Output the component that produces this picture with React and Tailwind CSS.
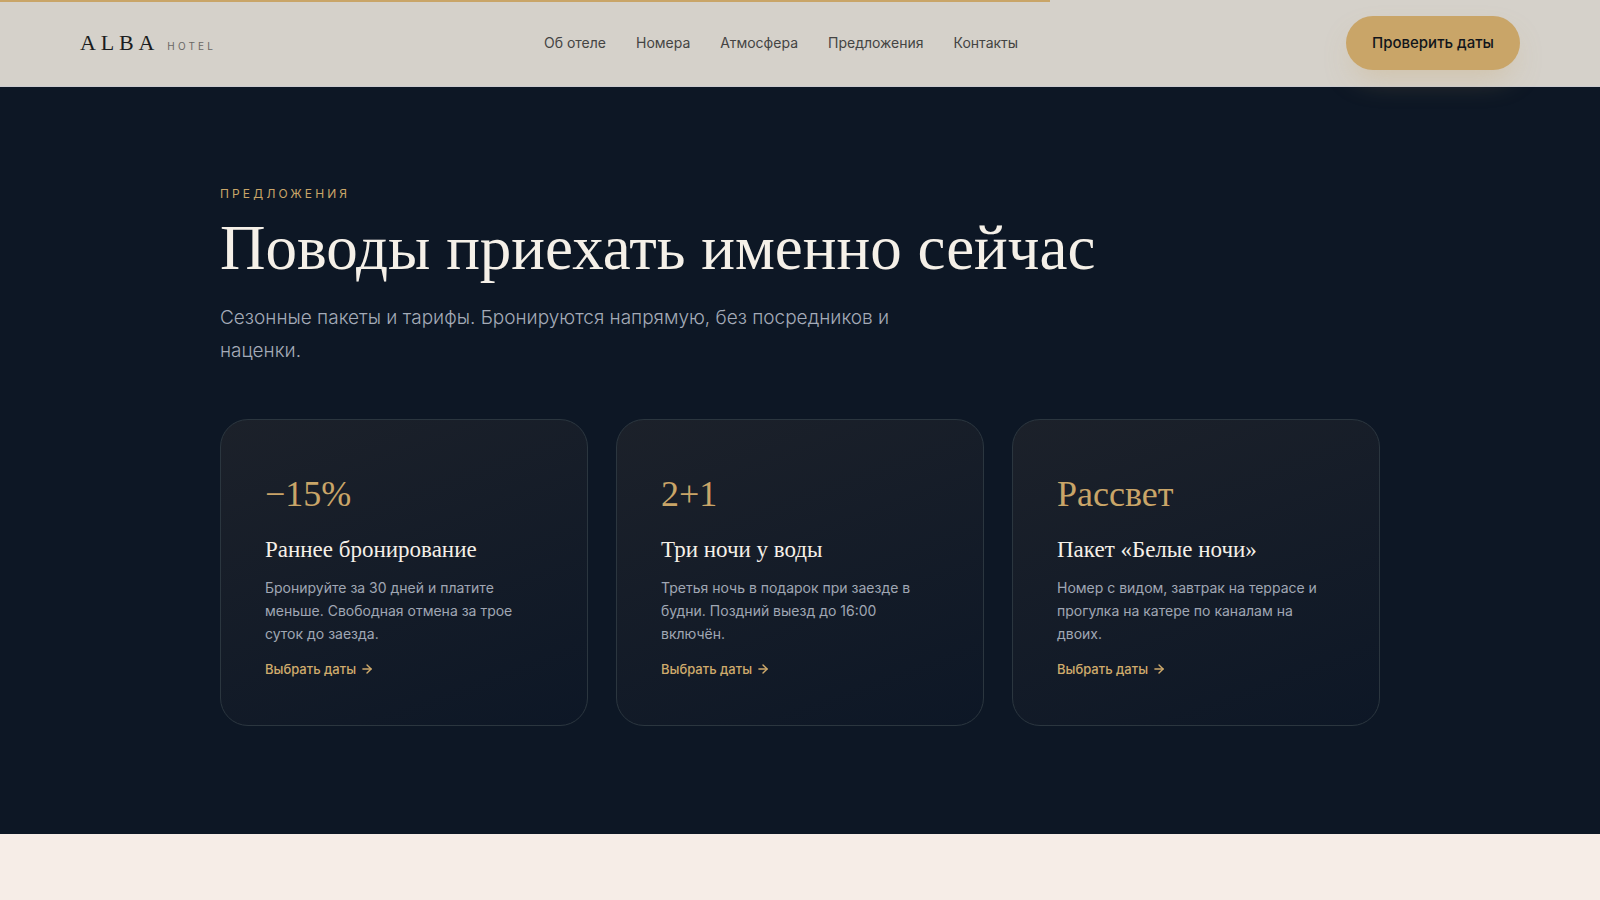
import { ArrowRight } from "lucide-react";

const links = [
  ["Об отеле", "#about"],
  ["Номера", "#rooms"],
  ["Атмосфера", "#mood"],
  ["Предложения", "#offers"],
  ["Контакты", "#contacts"],
];

const offers = [
  {
    badge: "−15%",
    title: "Раннее бронирование",
    text: "Бронируйте за 30 дней и платите меньше. Свободная отмена за трое суток до заезда.",
  },
  {
    badge: "2+1",
    title: "Три ночи у воды",
    text: "Третья ночь в подарок при заезде в будни. Поздний выезд до 16:00 включён.",
  },
  {
    badge: "Рассвет",
    title: "Пакет «Белые ночи»",
    text: "Номер с видом, завтрак на террасе и прогулка на катере по каналам на двоих.",
  },
];

function Header() {
  return (
    <header className="sticky top-0 z-10 border-b border-[#cbcbcf] bg-[#d5d1ca]">
      <div className="absolute inset-x-0 top-0 h-0.5">
        <div className="h-full w-[65.6%] bg-[#c9a568]" />
      </div>
      <div className="flex items-center justify-between px-20 py-4">
        <a href="#top" className="flex items-baseline gap-2 text-[#1b1d20]">
          <span className="font-['Liberation_Serif',serif] text-[22px] leading-8 font-medium tracking-[0.22em]">
            ALBA
          </span>
          <span className="text-[10px] tracking-[0.32em] text-[#6a6865]">HOTEL</span>
        </a>
        <nav className="flex gap-[30px] text-sm leading-[22px] text-[#444443]">
          {links.map(([label, href]) => (
            <a key={href} href={href}>
              {label}
            </a>
          ))}
        </nav>
        <button
          type="button"
          className="h-[54px] rounded-full bg-[#c9a568] px-[26px] text-[15px] font-medium text-[#11151b] shadow-[0_14px_30px_-8px_rgba(201,165,104,0.35)]"
        >
          Проверить даты
        </button>
      </div>
    </header>
  );
}

function Offer({ badge, title, text }) {
  return (
    <article className="rounded-[28px] border border-[#2b363f] bg-linear-160 from-[#1c212a] to-[#0d1726] p-11">
      <p className="font-['Liberation_Serif',serif] text-[36px] leading-[60px] text-[#c9a568]">{badge}</p>
      <h3 className="mt-2.5 font-['Liberation_Serif',serif] text-[23px] leading-8 text-[#f5f0e8]">{title}</h3>
      <p className="mt-2.5 text-sm leading-[23px] text-[#a0a7b4]">{text}</p>
      <a href="#booking" className="mt-3 flex items-center gap-1 text-[13px] leading-6 font-medium text-[#d0ab6c]">
        Выбрать даты
        <ArrowRight className="size-3.5" strokeWidth={2.4} aria-hidden="true" />
      </a>
    </article>
  );
}

export default function App() {
  return (
    <div id="top" className="min-h-screen bg-[#f6ede7] font-['Inter',sans-serif]">
      <Header />
      <section id="offers" className="bg-[#0d1725] px-10 pt-24 pb-27">
        <div className="mx-auto max-w-[1160px]">
          <p className="text-xs leading-[22px] tracking-[0.26em] text-[#c9a568] uppercase">Предложения</p>
          <h2 className="mt-1.5 font-['Liberation_Serif',serif] text-[63px] leading-[74px] text-[#f5f0e8]">
            Поводы приехать именно сейчас
          </h2>
          <p className="mt-4 max-w-[680px] text-[19px] leading-[33px] font-light text-[#a4abb8]">
            Сезонные пакеты и тарифы. Бронируются напрямую, без посредников и наценки.
          </p>
          <div className="mt-13 grid grid-cols-3 gap-7">
            {offers.map((offer) => (
              <Offer key={offer.title} {...offer} />
            ))}
          </div>
        </div>
      </section>
    </div>
  );
}
